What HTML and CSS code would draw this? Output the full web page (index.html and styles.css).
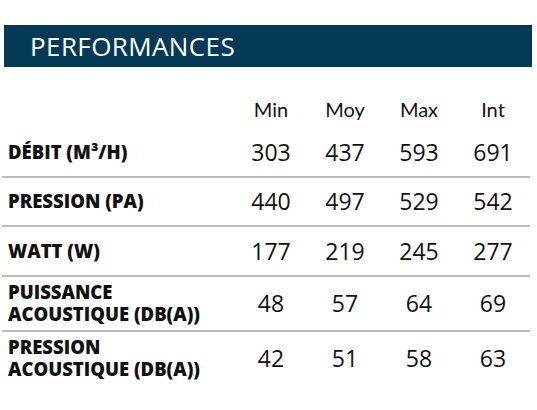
FILE: index.html
```html
<!DOCTYPE html>
<html lang="fr">
<head>
    <meta charset="UTF-8">
    <meta name="viewport" content="width=device-width, initial-scale=1.0">
    <title>Performances</title>
    <link rel="stylesheet" href="styles.css">
</head>
<body>
    <div class="banner">
        <h2>PERFORMANCES</h2>
    </div>
    <table class="perf">
        <thead>
            <tr>
                <th class="label"></th>
                <th>Min</th>
                <th>Moy</th>
                <th>Max</th>
                <th>Int</th>
            </tr>
        </thead>
        <tbody>
            <tr>
                <td class="label">DÉBIT (M³/H)</td>
                <td>303</td>
                <td>437</td>
                <td>593</td>
                <td>691</td>
            </tr>
            <tr>
                <td class="label">PRESSION (PA)</td>
                <td>440</td>
                <td>497</td>
                <td>529</td>
                <td>542</td>
            </tr>
            <tr>
                <td class="label">WATT (W)</td>
                <td>177</td>
                <td>219</td>
                <td>245</td>
                <td>277</td>
            </tr>
            <tr class="double">
                <td class="label">PUISSANCE<br>ACOUSTIQUE (DB(A))</td>
                <td>48</td>
                <td>57</td>
                <td>64</td>
                <td>69</td>
            </tr>
            <tr class="double">
                <td class="label">PRESSION<br>ACOUSTIQUE (DB(A))</td>
                <td>42</td>
                <td>51</td>
                <td>58</td>
                <td>63</td>
            </tr>
        </tbody>
    </table>
</body>
</html>
```

FILE: styles.css
```css
body {
    margin: 0;
    background: #ffffff;
    color: #111111;
    font-family: 'Open Sans', 'Noto Sans', sans-serif;
}
.banner {
    margin: 25px 5px 0 4px;
    height: 42px;
    background-color: #053a57;
    display: flex;
    align-items: center;
    padding-left: 26px;
}
.banner h2 {
    margin: 0;
    color: #ffffff;
    font-size: 26px;
    font-weight: 400;
    letter-spacing: 0.4px;
}
.perf {
    margin: 22px 0 0 2px;
    width: 528px;
    border-collapse: collapse;
    table-layout: fixed;
}
.perf th {
    height: 39px;
    padding: 0;
    width: 74px;
    font-family: Lato, 'Open Sans', sans-serif;
    font-size: 20px;
    font-weight: 400;
    text-align: center;
}
.perf th.label {
    width: auto;
}
.perf td {
    height: 47.5px;
    padding: 0;
    font-size: 23px;
    font-weight: 400;
    text-align: center;
    vertical-align: middle;
}
.perf td.label {
    padding-left: 6px;
    font-size: 18.5px;
    font-weight: 800;
    line-height: 22px;
    text-align: left;
}
.perf tbody tr {
    border-bottom: 2px solid #bcbcbc;
}
.perf tbody tr:last-child {
    border-bottom: none;
}
.perf tr.double td {
    height: 53px;
}
```
